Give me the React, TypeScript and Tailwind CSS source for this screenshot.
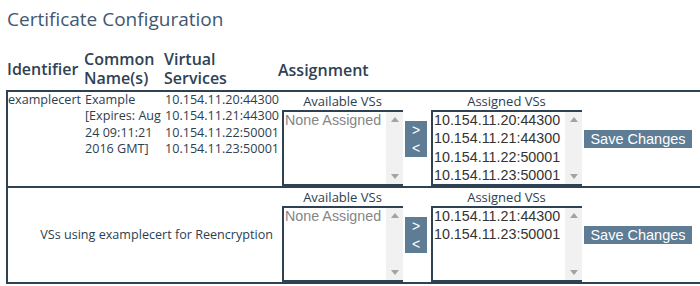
import React from "react";

const border = "border-[#2f4254]";

function ScrollBox({ items, muted }: { items: string[]; muted?: boolean }) {
  return (
    <div className={`flex h-[76px] border-2 border-r-0 ${border} bg-white`}>
      <div className="flex-1 overflow-hidden pl-[1px] font-['Liberation_Sans',Arial,sans-serif] text-[14.3px] leading-[18.5px]">
        <div className="-mt-[1px]">
          {items.map((t) => (
            <div key={t} className={muted ? "text-[#858585]" : "text-[#333333]"}>
              {t}
            </div>
          ))}
        </div>
      </div>
      <div className="flex w-[17px] flex-col items-center justify-between bg-[#f1f1f1] py-[5px]">
        <svg width="8" height="5" viewBox="0 0 8 5">
          <path d="M0 5 L4 0 L8 5 Z" fill="#a3a3a3" />
        </svg>
        <svg width="8" height="5" viewBox="0 0 8 5">
          <path d="M0 0 L4 5 L8 0 Z" fill="#a3a3a3" />
        </svg>
      </div>
    </div>
  );
}

function Assignment({ assigned }: { assigned: string[] }) {
  return (
    <div className="flex h-full items-center pl-[2px]">
      <div className="flex w-[121px] flex-col">
        <div className="h-[17px] text-center text-[13px] leading-[16px]">Available VSs</div>
        <ScrollBox items={["None Assigned"]} muted />
      </div>
      <div className="ml-[2px] flex h-[36px] w-[22px] flex-col items-center justify-center bg-[#5e7c94] font-['Liberation_Sans',Arial,sans-serif] text-[14px] leading-[18px] text-white">
        <span>&gt;</span>
        <span>&lt;</span>
      </div>
      <div className="ml-[4px] flex w-[151px] flex-col">
        <div className="h-[17px] text-center text-[13px] leading-[16px]">Assigned VSs</div>
        <ScrollBox items={assigned} />
      </div>
      <div className="ml-[2px] flex h-[18px] w-[108px] items-center justify-center bg-[#5e7c94] font-['Liberation_Sans',Arial,sans-serif] text-[14.5px] leading-[18px] text-white">
        Save Changes
      </div>
    </div>
  );
}

export default function App() {
  return (
    <div className="h-[286px] w-[700px] overflow-hidden bg-white font-['Open_Sans',sans-serif] text-[#2d3e4f]">
      <h1 className="pl-[7px] pt-[6px] text-[19px] font-normal leading-[26px] text-[#3f5770]">
        Certificate Configuration
      </h1>
      <div className="mt-[16px] grid h-[42px] grid-cols-[77px_80px_115px_1fr] items-center pl-[6px] text-[16px] font-semibold leading-[19px] text-[#2f4254]">
        <div className="pl-[1px]">Identifier</div>
        <div className="flex flex-col pl-[1px]">
          <span className="h-[19px]">Common</span>
          <span className="h-[19px]">Name(s)</span>
        </div>
        <div className="flex flex-col pl-[1px]">
          <span className="h-[19px]">Virtual</span>
          <span className="h-[19px]">Services</span>
        </div>
        <div className="pt-[2px]">Assignment</div>
      </div>
      <div className={`ml-[6px] w-[710px] border-2 ${border}`}>
        <div className="grid h-[94px] grid-cols-[77px_80px_115px_1fr] text-[12.6px] leading-[16.3px]">
          <div>examplecert</div>
          <div>
            <div>Example</div>
            <div>[Expires: Aug</div>
            <div>24 09:11:21</div>
            <div>2016 GMT]</div>
          </div>
          <div>
            <div>10.154.11.20:44300</div>
            <div>10.154.11.21:44300</div>
            <div>10.154.11.22:50001</div>
            <div>10.154.11.23:50001</div>
          </div>
          <Assignment
            assigned={[
              "10.154.11.20:44300",
              "10.154.11.21:44300",
              "10.154.11.22:50001",
              "10.154.11.23:50001",
            ]}
          />
        </div>
        <div className={`grid h-[96px] grid-cols-[272px_1fr] border-t-2 ${border}`}>
          <div className="flex items-center justify-end pr-[7px] text-[12.6px]">
            VSs using examplecert for Reencryption
          </div>
          <Assignment assigned={["10.154.11.21:44300", "10.154.11.23:50001"]} />
        </div>
      </div>
    </div>
  );
}
